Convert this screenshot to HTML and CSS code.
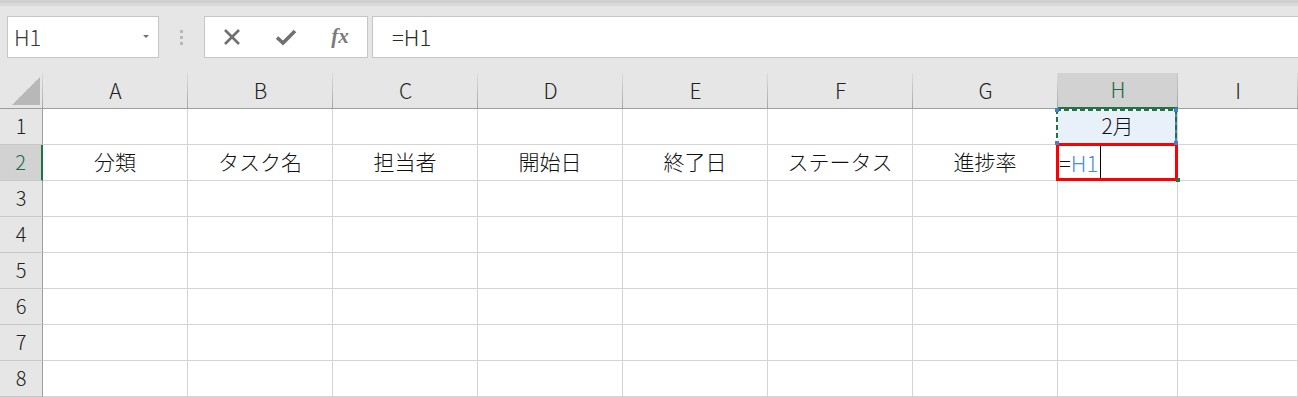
FILE: index.html
```html
<!DOCTYPE html>
<html lang="ja">
<head>
    <meta charset="UTF-8">
    <title>Excel - セル参照</title>
    <link rel="stylesheet" href="styles.css">
</head>
<body>
    <div class="formula-row">
        <div class="name-box">
            <span>H1</span>
            <span class="drop"></span>
        </div>
        <div class="grip">
            <span></span><span></span><span></span>
        </div>
        <div class="fn-box">
            <span class="fn-btn">
                <svg width="18" height="18" viewBox="0 0 18 18"><path d="M2 2 L16 16 M16 2 L2 16" stroke="#707070" stroke-width="2.6" fill="none"/></svg>
            </span>
            <span class="fn-btn">
                <svg width="22" height="18" viewBox="0 0 22 18"><path d="M2 9.5 L8 15 L20 3" stroke="#707070" stroke-width="3.6" fill="none"/></svg>
            </span>
            <span class="fn-btn fx">fx</span>
        </div>
        <div class="formula-input">=H1</div>
    </div>

    <div class="sheet">
        <!-- column headers -->
        <div class="corner">
            <svg width="42" height="35" viewBox="0 0 42 35"><polygon points="12,32 40,4 40,32" fill="#b8b8b8"/></svg>
        </div>
        <div class="col-head">A</div>
        <div class="col-head">B</div>
        <div class="col-head">C</div>
        <div class="col-head">D</div>
        <div class="col-head">E</div>
        <div class="col-head">F</div>
        <div class="col-head">G</div>
        <div class="col-head active">H</div>
        <div class="col-head">I</div>

        <!-- row 1 -->
        <div class="row-head">1</div>
        <div class="cell"></div><div class="cell"></div><div class="cell"></div><div class="cell"></div>
        <div class="cell"></div><div class="cell"></div><div class="cell"></div>
        <div class="cell copied">2月
            <span class="ref-corner tl"></span><span class="ref-corner tr"></span>
            <span class="ref-corner bl"></span><span class="ref-corner br"></span>
        </div>
        <div class="cell"></div>

        <!-- row 2 -->
        <div class="row-head active">2</div>
        <div class="cell">分類</div>
        <div class="cell">タスク名</div>
        <div class="cell">担当者</div>
        <div class="cell">開始日</div>
        <div class="cell">終了日</div>
        <div class="cell">ステータス</div>
        <div class="cell">進捗率</div>
        <div class="cell editing">=<span class="ref">H1</span><span class="caret"></span><span class="fill-handle"></span></div>
        <div class="cell"></div>

        <!-- rows 3-8 -->
        <div class="row-head">3</div>
        <div class="cell"></div><div class="cell"></div><div class="cell"></div><div class="cell"></div><div class="cell"></div>
        <div class="cell"></div><div class="cell"></div><div class="cell"></div><div class="cell"></div>
        <div class="row-head">4</div>
        <div class="cell"></div><div class="cell"></div><div class="cell"></div><div class="cell"></div><div class="cell"></div>
        <div class="cell"></div><div class="cell"></div><div class="cell"></div><div class="cell"></div>
        <div class="row-head">5</div>
        <div class="cell"></div><div class="cell"></div><div class="cell"></div><div class="cell"></div><div class="cell"></div>
        <div class="cell"></div><div class="cell"></div><div class="cell"></div><div class="cell"></div>
        <div class="row-head">6</div>
        <div class="cell"></div><div class="cell"></div><div class="cell"></div><div class="cell"></div><div class="cell"></div>
        <div class="cell"></div><div class="cell"></div><div class="cell"></div><div class="cell"></div>
        <div class="row-head">7</div>
        <div class="cell"></div><div class="cell"></div><div class="cell"></div><div class="cell"></div><div class="cell"></div>
        <div class="cell"></div><div class="cell"></div><div class="cell"></div><div class="cell"></div>
        <div class="row-head">8</div>
        <div class="cell"></div><div class="cell"></div><div class="cell"></div><div class="cell"></div><div class="cell"></div>
        <div class="cell"></div><div class="cell"></div><div class="cell"></div><div class="cell"></div>
    </div>
</body>
</html>
```

FILE: styles.css
```css
body {
    margin: 0;
    background-color: #e6e6e6;
    font-family: "Noto Sans CJK JP", "Noto Sans", sans-serif;
    font-weight: 300;
    color: #1a1a1a;
    overflow: hidden;
}
.formula-row {
    display: flex;
    height: 58px;
    box-sizing: border-box;
    padding: 16px 0 0 7px;
    background: linear-gradient(#d0d0d0 0, #d0d0d0 3px, #dadada 3px, #dadada 6px, #e6e6e6 6px);
}
.name-box {
    width: 152px;
    height: 42px;
    box-sizing: border-box;
    border: 1px solid #c6c6c6;
    background-color: #fff;
    display: flex;
    align-items: center;
    justify-content: space-between;
    padding: 0 9px 2px 6px;
    font-size: 22px;
    color: #3a3a3a;
}
.drop {
    width: 0;
    height: 0;
    border-left: 3px solid transparent;
    border-right: 3px solid transparent;
    border-top: 3px solid #707070;
}
.grip {
    width: 45px;
    display: flex;
    flex-direction: column;
    align-items: center;
    justify-content: center;
    gap: 3px;
}
.grip span {
    width: 3px;
    height: 3px;
    background-color: #b8b8b8;
}
.fn-box {
    width: 164px;
    height: 42px;
    box-sizing: border-box;
    border: 1px solid #c6c6c6;
    background-color: #fff;
    display: flex;
}
.fn-btn {
    width: 54px;
    display: flex;
    align-items: center;
    justify-content: center;
}
.fx {
    font-family: "Liberation Serif", serif;
    font-style: italic;
    font-weight: bold;
    font-size: 21px;
    color: #7a7a7a;
    padding-bottom: 2px;
}
.formula-input {
    flex: 1;
    height: 42px;
    box-sizing: border-box;
    margin-left: 4px;
    border: 1px solid #c6c6c6;
    border-right: none;
    background-color: #fff;
    display: flex;
    align-items: center;
    padding: 0 0 2px 19px;
    font-size: 22px;
    color: #2a2a2a;
}
.sheet {
    margin-top: 15px;
    display: grid;
    grid-template-columns: 43px repeat(7, 145px) 120px 1fr;
    grid-auto-rows: 36px;
}
.corner, .col-head {
    box-sizing: border-box;
    border-bottom: 1px solid #9e9e9e;
    background: linear-gradient(#dcdcdc, #a6a6a6) right / 1px 100% no-repeat, #e6e6e6;
}
.corner svg {
    display: block;
}
.col-head {
    display: flex;
    align-items: center;
    justify-content: center;
    padding-bottom: 2px;
    font-size: 21px;
    color: #222;
}
.col-head.active {
    background: linear-gradient(#c8c8c8, #a6a6a6) right / 1px 100% no-repeat, #d2d2d2;
    border-bottom: 2px solid #217346;
    color: #1d6a43;
}
.row-head {
    box-sizing: border-box;
    background-color: #e6e6e6;
    border-right: 1px solid #9e9e9e;
    border-bottom: 1px solid #c8c8c8;
    display: flex;
    align-items: center;
    justify-content: center;
    padding-bottom: 2px;
    font-size: 20px;
    color: #222;
}
.row-head.active {
    background-color: #d2d2d2;
    border-right: 2px solid #217346;
    color: #1d6a43;
}
.cell {
    box-sizing: border-box;
    background-color: #fff;
    border-right: 1px solid #d4d4d4;
    border-bottom: 1px solid #d4d4d4;
    display: flex;
    align-items: center;
    justify-content: center;
    padding-bottom: 4px;
    font-size: 21px;
    color: #111;
    position: relative;
}
.copied {
    background-color: #e8f0fa;
}
.copied::after {
    content: "";
    position: absolute;
    top: 0;
    left: -2px;
    right: 0;
    bottom: -1px;
    background:
        repeating-linear-gradient(90deg, #217346 0 5px, #fff 5px 8px) top / 100% 2px no-repeat,
        repeating-linear-gradient(90deg, #217346 0 5px, #fff 5px 8px) bottom / 100% 2px no-repeat,
        repeating-linear-gradient(180deg, #217346 0 5px, #fff 5px 8px) left / 2px 100% no-repeat,
        repeating-linear-gradient(180deg, #217346 0 5px, #4a86c8 5px 8px) right / 2px 100% no-repeat;
}
.ref-corner {
    position: absolute;
    width: 4px;
    height: 4px;
    background-color: #3f80cf;
    z-index: 1;
}
.ref-corner.tl { top: -1px; left: -3px; }
.ref-corner.tr { top: -1px; right: -1px; }
.ref-corner.bl { bottom: -1px; left: -3px; }
.ref-corner.br { bottom: -1px; right: -1px; }
.editing {
    justify-content: flex-start;
    padding-left: 1px;
    padding-bottom: 2px;
    font-size: 22px;
    color: #111;
}
.editing::after {
    content: "";
    position: absolute;
    top: -2px;
    left: -2px;
    right: -1px;
    bottom: -1px;
    border: 3px solid #ff0000;
}
.ref {
    color: #4a8fda;
}
.caret {
    width: 1px;
    height: 33px;
    margin: 2px 0 0 2px;
    background-color: #000;
}
.fill-handle {
    position: absolute;
    right: -3px;
    bottom: -2px;
    width: 4px;
    height: 4px;
    background-color: #217346;
    z-index: 1;
}
```
